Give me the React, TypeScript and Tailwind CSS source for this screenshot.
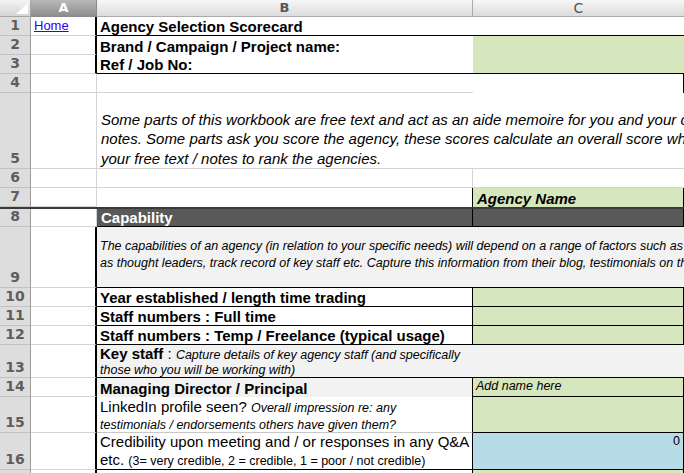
import React from "react";

const F = { fontFamily: '"Liberation Sans", Arial, sans-serif' };

function RowHead({ n, h }: { n: number; h: string }) {
  return (
    <div
      className={`${h} flex items-end justify-center bg-[#dddddd] border-r border-b border-r-[#9a9a9a] border-b-[#c2c2c2] text-[14px] font-bold text-[#5e5e5e] leading-[17px] pb-[1px]`}
      style={{ fontFamily: '"DejaVu Sans", Verdana, sans-serif' }}
    >
      {n}
    </div>
  );
}

export default function App() {
  const ColA = (h: string, extra = "") => (
    <div className={`${h} border-r border-b border-[#d4d4d4] ${extra}`} />
  );
  return (
    <div className="w-[684px] h-[473px] overflow-hidden bg-white relative" style={F}>
      {/* column header */}
      <div className="flex h-[17px]">
        <div className="w-[31px] h-[17px] bg-gradient-to-b from-[#f4f4f4] to-[#d4d4d4] border-r border-b border-[#a8a8a8] relative">
          <svg className="absolute right-[2px] bottom-[2px]" width="12" height="11" viewBox="0 0 12 11">
            <polygon points="12,0 12,11 0,11" fill="#ffffff" />
          </svg>
        </div>
        <div className="w-[66px] h-[17px] bg-gradient-to-b from-[#b9b9b9] to-[#8d8d8d] border-r border-b border-[#8a8a8a] flex items-center justify-center text-white font-bold text-[13px]" style={{ fontFamily: '"DejaVu Sans", Verdana, sans-serif' }}>
          A
        </div>
        <div className="w-[376px] h-[17px] bg-gradient-to-b from-[#f7f7f7] to-[#dcdcdc] border-r border-b border-[#ababab] flex items-center justify-center text-[#555] font-bold text-[13px]" style={{ fontFamily: '"DejaVu Sans", Verdana, sans-serif' }}>
          B
        </div>
        <div className="flex-1 h-[17px] bg-gradient-to-b from-[#f7f7f7] to-[#dcdcdc] border-b border-[#ababab] flex items-center justify-center text-[#555] font-normal text-[14px]" style={{ fontFamily: '"DejaVu Sans", Verdana, sans-serif' }}>
          C
        </div>
      </div>

      <div className="grid grid-cols-[31px_66px_376px_1fr]">
        {/* Row 1 */}
        <RowHead n={1} h="h-[19px]" />
        <div className="h-[19px] border-r-2 border-r-black border-b border-b-[#d4d4d4] flex items-end pl-[3px]">
          <a href="#" className="text-[13px] text-[#2b00ff] underline leading-[16px] pb-[1px]">Home</a>
        </div>
        <div className="h-[19px] border-b border-b-black flex items-end pl-[3px] font-bold text-[15px] leading-[17px] text-black">
          Agency Selection Scorecard
        </div>
        <div className="h-[19px] border-b border-b-black" />

        {/* Row 2 */}
        <RowHead n={2} h="h-[19px]" />
        <div className="h-[19px] border-r-2 border-r-black border-b border-b-[#d4d4d4]" />
        <div className="h-[19px] flex items-end pl-[3px] font-bold text-[15px] leading-[17px] text-black">
          Brand / Campaign / Project name:
        </div>
        <div className="h-[19px] bg-[#d7e7bd]" />

        {/* Row 3 */}
        <RowHead n={3} h="h-[19px]" />
        <div className="h-[19px] border-r-2 border-r-black border-b border-b-[#d4d4d4]" />
        <div className="h-[19px] border-b border-b-black flex items-end pl-[3px] font-bold text-[15px] leading-[17px] text-black">
          Ref / Job No:
        </div>
        <div className="h-[19px] bg-[#d7e7bd] border-b border-b-black" />

        {/* Row 4 */}
        <RowHead n={4} h="h-[19px]" />
        {ColA("h-[19px]")}
        <div className="h-[19px] border-b border-[#d4d4d4]" />
        <div className="h-[19px] border-r border-r-black" />

        {/* Row 5 */}
        <RowHead n={5} h="h-[76px]" />
        {ColA("h-[76px]")}
        <div className="col-span-2 h-[76px] border-b border-[#d4d4d4] overflow-hidden flex flex-col justify-end pl-[4px] pb-0 italic text-[15px] leading-[19.5px] text-black whitespace-nowrap">
          <div>Some parts of this workbook are free text and act as an aide memoire for you and your colleagues to make</div>
          <div>notes. Some parts ask you score the agency, these scores calculate an overall score which you can use with</div>
          <div>your free text / notes to rank the agencies.</div>
        </div>

        {/* Row 6 */}
        <RowHead n={6} h="h-[19px]" />
        {ColA("h-[19px]")}
        <div className="h-[19px] border-r border-b border-[#d4d4d4]" />
        <div className="h-[19px] border-b border-[#d4d4d4]" />

        {/* Row 7 */}
        <RowHead n={7} h="h-[19px]" />
        {ColA("h-[19px]")}
        <div className="h-[19px] border-r border-r-black" />
        <div className="h-[19px] bg-[#d7e7bd] border-r border-r-black flex items-end pl-[4px] font-bold italic text-[15px] leading-[17px] text-black">
          Agency Name
        </div>

        {/* frozen divider */}
        <div className="col-span-4 h-[2px] bg-[#3a3a3a]" />

        {/* Row 8 */}
        <RowHead n={8} h="h-[18px]" />
        {ColA("h-[18px]")}
        <div className="h-[18px] bg-[#595959] border-r border-r-black border-b border-b-black flex items-end pl-[4px] font-bold text-[15px] leading-[17px] text-white">
          Capability
        </div>
        <div className="h-[18px] bg-[#595959] border-r border-r-black border-b border-b-black" />

        {/* Row 9 */}
        <RowHead n={9} h="h-[61px]" />
        <div className="h-[61px] border-r-2 border-r-black border-b border-b-[#d4d4d4]" />
        <div className="col-span-2 h-[61px] bg-[#f2f2f2] border-b border-b-black overflow-hidden flex flex-col justify-center pl-[3px] pb-[4px] italic text-[12.5px] leading-[17px] text-black whitespace-nowrap">
          <div>The capabilities of an agency (in relation to your specific needs) will depend on a range of factors such as their reputation</div>
          <div>as thought leaders, track record of key staff etc. Capture this information from their blog, testimonials on their website</div>
        </div>

        {/* Rows 10-12 */}
        {[
          ["10", "Year established / length time trading"],
          ["11", "Staff numbers : Full time"],
          ["12", "Staff numbers : Temp / Freelance (typical usage)"],
        ].map(([n, t]) => (
          <React.Fragment key={n}>
            <RowHead n={Number(n)} h="h-[19px]" />
            <div className="h-[19px] border-r-2 border-r-black border-b border-b-[#d4d4d4]" />
            <div className="h-[19px] border-r border-r-black border-b border-b-black flex items-end pl-[3px] font-bold text-[15px] leading-[17px] text-black whitespace-nowrap">
              {t}
            </div>
            <div className="h-[19px] bg-[#d7e7bd] border-r border-r-black border-b border-b-black" />
          </React.Fragment>
        ))}

        {/* Row 13 */}
        <RowHead n={13} h="h-[33px]" />
        <div className="h-[33px] border-r-2 border-r-black border-b border-b-[#d4d4d4]" />
        <div className="col-span-2 h-[33px] bg-[#f2f2f2] border-b border-b-black flex flex-col justify-end pl-[3px] pb-0 text-black whitespace-nowrap">
          <div className="leading-[16px]">
            <span className="font-bold text-[15px]">Key staff</span>
            <span className="text-[15px]"> : </span>
            <span className="italic text-[12.5px]">Capture details of key agency staff (and specifically</span>
          </div>
          <div className="italic text-[12.5px] leading-[14px]">those who you will be working with)</div>
        </div>

        {/* Row 14 */}
        <RowHead n={14} h="h-[19px]" />
        <div className="h-[19px] border-r-2 border-r-black border-b border-b-[#d4d4d4]" />
        <div className="h-[19px] bg-[#f2f2f2] border-r border-r-black flex items-end pl-[3px] font-bold text-[15px] leading-[17px] text-black">
          Managing Director / Principal
        </div>
        <div className="h-[19px] bg-[#d7e7bd] border-r border-r-black border-b border-b-black flex items-start pl-[3px] italic text-[12.5px] leading-[16px] text-black">
          Add name here
        </div>

        {/* Row 15 */}
        <RowHead n={15} h="h-[36px]" />
        <div className="h-[36px] border-r-2 border-r-black border-b border-b-[#d4d4d4]" />
        <div className="h-[36px] border-r border-r-black border-b border-b-[#c8c8c8] flex flex-col justify-end pl-[3px] pb-0 text-black whitespace-nowrap overflow-hidden">
          <div className="leading-[20px]">
            <span className="text-[15px]">LinkedIn profile seen? </span>
            <span className="italic text-[12.5px]">Overall impression re: any</span>
          </div>
          <div className="italic text-[12.5px] leading-[14px]">testimonials / endorsements others have given them?</div>
        </div>
        <div className="h-[36px] bg-[#d7e7bd] border-r border-r-black border-b border-b-black" />

        {/* Row 16 */}
        <RowHead n={16} h="h-[37px]" />
        <div className="h-[37px] border-r-2 border-r-black border-b border-b-[#d4d4d4]" />
        <div className="h-[37px] border-r border-r-black border-b border-b-black flex flex-col justify-end pl-[3px] pb-0 text-black whitespace-nowrap overflow-hidden">
          <div className="text-[15px] leading-[20px]">Credibility upon meeting and / or responses in any Q&amp;A</div>
          <div className="leading-[15px]">
            <span className="text-[15px]">etc. </span>
            <span className="text-[12.5px]">(3= very credible, 2 = credible, 1 = poor / not credible)</span>
          </div>
        </div>
        <div className="h-[37px] bg-[#b8dce7] border-r border-r-black border-b border-b-black flex items-start justify-end pr-[3px] text-[12.5px] leading-[16px] text-black">
          0
        </div>

        {/* Row 17 */}
        <RowHead n={17} h="h-[19px]" />
        <div className="h-[19px] border-r-2 border-r-black" />
        <div className="h-[19px] border-r border-r-black" />
        <div className="h-[19px] bg-[#d7e7bd] border-r border-r-black" />
      </div>
    </div>
  );
}
